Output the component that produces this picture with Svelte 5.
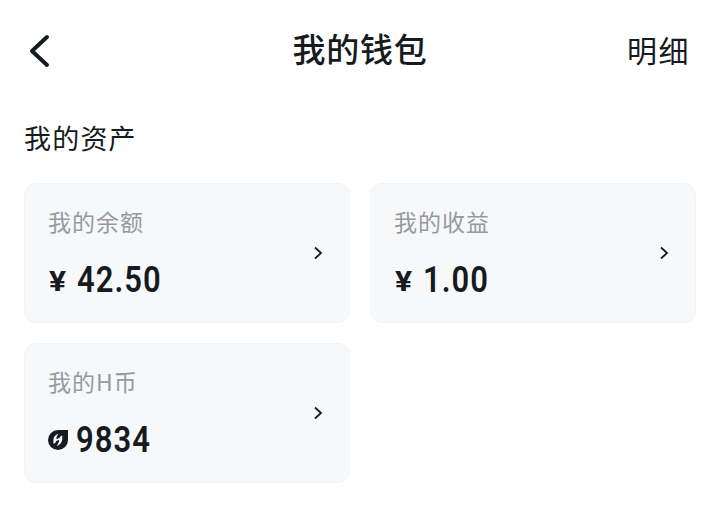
<script>
	const assets = [
		{ label: '我的余额', value: '42.50', type: 'money' },
		{ label: '我的收益', value: '1.00', type: 'money' },
		{ label: '我的H币', value: '9834', type: 'coin' }
	];
</script>

<div class="wallet">
	<header>
		<button class="back" aria-label="返回">
			<svg width="24" height="36" viewBox="0 0 24 36">
				<path d="M19 4 4 18 19 32" />
			</svg>
		</button>
		<h1>我的钱包</h1>
		<button class="detail">明细</button>
	</header>

	<h2>我的资产</h2>

	<div class="grid">
		{#each assets as asset}
			<div class="card">
				<div class="info">
					<div class="label">{asset.label}</div>
					<div class="amount">
						{#if asset.type === 'money'}
							<span class="yen">¥</span>
						{:else}
							<svg class="coin" width="20" height="20" viewBox="0 0 20 20">
								<path d="M10 0H20V10A10 10 0 1 1 10 0Z" fill="#161b20" />
								<path
									d="M10.6 3.6C7 4.8 5.2 7.4 5.3 11.4L5.5 14C7.2 13.2 8 12.2 8.2 11L11.2 9.8C11 12.2 10.2 13.8 8.6 16C12.6 14.6 14.4 11.8 14.3 8L14.2 5.4C12.4 6.2 11.6 7 11.3 8L8.4 9.2C8.5 7 9 5.6 10.6 3.6Z"
									fill="#f7f8fa"
								/>
							</svg>
						{/if}
						<span class="number">{asset.value}</span>
					</div>
				</div>
				<svg class="arrow" width="10" height="14" viewBox="0 0 10 14">
					<path d="M2 1.5 8 7 2 12.5" />
				</svg>
			</div>
		{/each}
	</div>
</div>

<style>
	:global(body) {
		margin: 0;
		background: #fff;
	}

	.wallet {
		height: 525px;
		box-sizing: border-box;
		padding: 0 23px 0 24px;
		color: #161b20;
		font-family: 'Noto Sans CJK SC', sans-serif;
	}

	header {
		display: grid;
		grid-template-columns: 1fr auto 1fr;
		align-items: center;
		height: 102px;
	}

	button {
		border: 0;
		padding: 0;
		background: none;
		color: inherit;
		font-family: inherit;
	}

	.back {
		justify-self: start;
		height: 36px;
		padding-left: 4px;
	}

	.back svg {
		display: block;
		fill: none;
		stroke: currentColor;
		stroke-width: 4;
		stroke-linecap: round;
		stroke-linejoin: round;
	}

	h1 {
		margin: 0;
		padding-bottom: 6px;
		font-size: 33px;
		font-weight: 500;
		line-height: 48px;
		letter-spacing: 0.8px;
	}

	.detail {
		justify-self: end;
		padding: 0 6px 4px 0;
		font-size: 30px;
		line-height: 44px;
		letter-spacing: 1.5px;
	}

	h2 {
		margin: 16px 0 25px;
		font-size: 27px;
		font-weight: 400;
		line-height: 40px;
		letter-spacing: 1.2px;
	}

	.grid {
		display: grid;
		grid-template-columns: 326px 326px;
		gap: 20px;
	}

	.card {
		display: flex;
		align-items: center;
		justify-content: space-between;
		height: 140px;
		box-sizing: border-box;
		padding: 0 26px 0 23px;
		border: 1px solid #f1f3f4;
		border-radius: 12px;
		background: #f7f8fa;
	}

	.info {
		height: 100px;
	}

	.label {
		height: 40px;
		color: #979a9d;
		font-size: 23px;
		font-weight: 400;
		line-height: 37px;
		letter-spacing: 1px;
	}

	.amount {
		display: flex;
		align-items: center;
		height: 40px;
		margin-top: 16px;
		font-family: Roboto, sans-serif;
	}

	.yen {
		width: 28px;
		margin-left: 1px;
		padding-top: 5px;
		font-size: 28px;
		font-weight: 700;
		line-height: 40px;
		transform: scaleX(1.14);
		transform-origin: left;
	}

	.number {
		padding-top: 2px;
		font-size: 36px;
		font-weight: 600;
		line-height: 40px;
		letter-spacing: 1.2px;
		transform: scaleX(0.86);
		transform-origin: left;
	}

	.coin {
		margin: 2px 8px 0 0;
	}

	.arrow {
		fill: none;
		stroke: #161b20;
		stroke-width: 1.8;
	}
</style>
